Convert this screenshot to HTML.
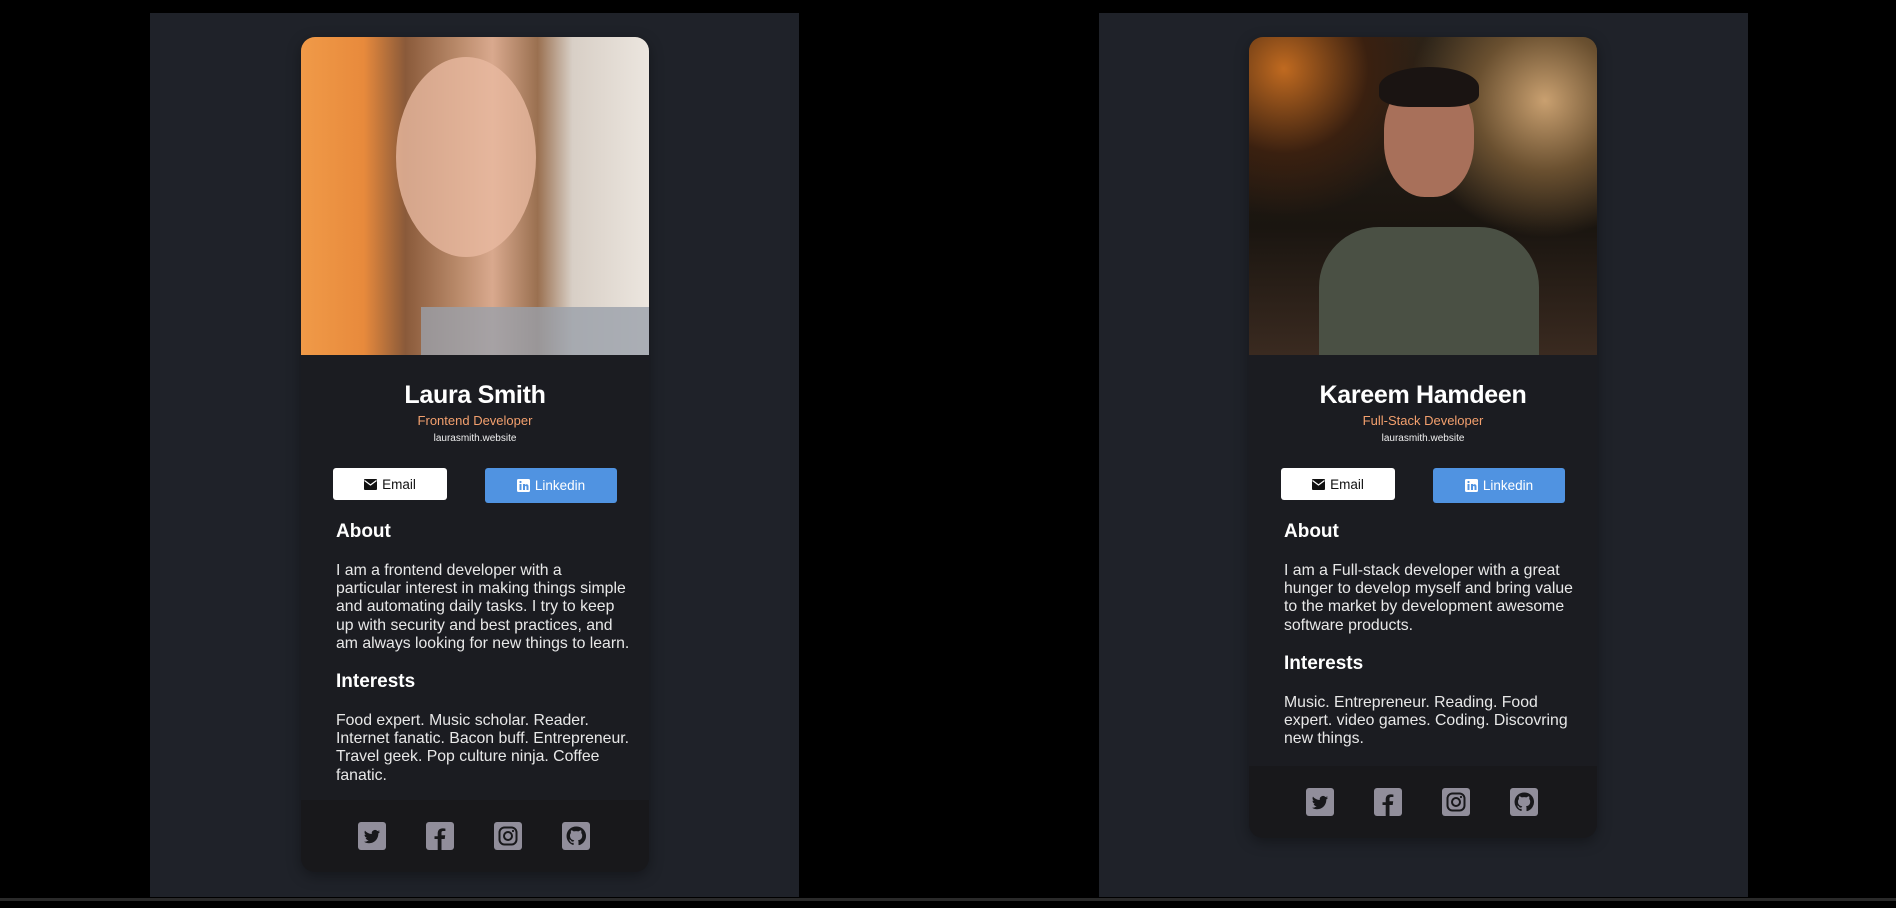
<!DOCTYPE html>
<html><head><meta charset="utf-8"><style>
*{margin:0;padding:0;box-sizing:border-box}
body{width:1896px;height:908px;background:#000;position:relative;overflow:hidden;font-family:"Liberation Sans",sans-serif}
.panel{position:absolute;top:13px;width:649px;height:884px;background:#1f2229}
.card{position:absolute;width:348px;background:#1b1c21;border-radius:14px;overflow:hidden;box-shadow:0 4px 14px rgba(0,0,0,.35)}
.photo{height:318px;position:relative;overflow:hidden}
.name{position:absolute;left:0;width:348px;text-align:center;color:#fff;font-weight:bold;font-size:25px;top:344px;letter-spacing:-.3px}
.job{position:absolute;left:0;width:348px;text-align:center;color:#f3a06e;font-size:13px;top:376px}
.site{position:absolute;left:0;width:348px;text-align:center;color:#f0f0f0;font-size:10px;top:396px}
.btn{position:absolute;top:431px;height:33px;border-radius:3px;font-size:13.5px;display:flex;align-items:center;justify-content:center;gap:5px}
.em{left:32px;width:114px;background:#fff;color:#111;height:32px}
.li{left:184px;width:132px;background:#5093e1;color:#fff;height:35px}
.h{position:absolute;left:35px;color:#fff;font-weight:bold;font-size:19px}
.p{position:absolute;left:35px;width:310px;color:#e8e8e8;font-size:15.8px;line-height:18.2px;white-space:nowrap}
.foot{position:absolute;left:0;bottom:0;width:348px;background:#18181b;height:72px}
.ic{position:absolute;top:22px;width:28px;height:28px;background:#918e9b;border-radius:3px}
.ic svg{width:28px;height:28px;display:block}
.line{position:absolute;left:0;top:898px;width:1896px;height:3px;background:#2a2a2a}
</style></head><body>
<div class="panel" style="left:150px"></div>
<div class="panel" style="left:1099px"></div>
<div class="line"></div>

<div class="card" style="left:301px;top:37px;height:835px">
 <div class="photo" style="background:linear-gradient(90deg,#f09a48 0%,#e88a3c 18%,#8a5a3a 30%,#b98a6a 45%,#d9a98e 55%,#9a7050 68%,#d8cfc6 78%,#ece6df 100%)">
  <div style="position:absolute;left:95px;top:20px;width:140px;height:200px;border-radius:50%;background:#e8b9a0;opacity:.8"></div>
  <div style="position:absolute;left:120px;top:270px;width:228px;height:60px;background:#9aa0aa;opacity:.8"></div>
 </div>
 <div class="name">Laura Smith</div>
 <div class="job">Frontend Developer</div>
 <div class="site">laurasmith.website</div>
 <div class="btn em"><svg width="13" height="11" viewBox="0 0 13 11"><rect width="13" height="11" rx="1" fill="#111"/><path d="M0.5 1.5L6.5 6L12.5 1.5" stroke="#fff" stroke-width="1.2" fill="none"/></svg>Email</div>
 <div class="btn li"><svg width="13" height="13" viewBox="0 0 13 13"><rect width="13" height="13" rx="1.5" fill="#fff"/><rect x="2.5" y="5" width="2" height="6" fill="#5093e1"/><circle cx="3.5" cy="3" r="1.1" fill="#5093e1"/><path d="M6 11V5h2v1c.5-1 3.5-1.5 3.5 1.5V11h-2V8c0-1.5-1.5-1.5-1.5 0v3z" fill="#5093e1"/></svg>Linkedin</div>
 <div class="h" style="top:484px">About</div>
 <div class="p" style="top:525px">I am a frontend developer with a<br>particular interest in making things simple<br>and automating daily tasks. I try to keep<br>up with security and best practices, and<br>am always looking for new things to learn.</div>
 <div class="h" style="top:634px">Interests</div>
 <div class="p" style="top:675px">Food expert. Music scholar. Reader.<br>Internet fanatic. Bacon buff. Entrepreneur.<br>Travel geek. Pop culture ninja. Coffee<br>fanatic.</div>
 <div class="foot">
  <div class="ic" style="left:57px"><svg viewBox="0 0 28 28"><path d="M22 9.5c-.6.3-1.2.4-1.9.5.7-.4 1.2-1 1.4-1.8-.6.4-1.3.6-2.1.8a3.3 3.3 0 0 0-5.6 3c-2.7-.1-5.2-1.4-6.8-3.4-.9 1.5-.4 3.4 1 4.4-.5 0-1-.2-1.5-.4 0 1.6 1.1 3 2.6 3.3-.5.1-1 .2-1.5.1.4 1.3 1.7 2.3 3.1 2.3A6.6 6.6 0 0 1 6 19.7c1.5.9 3.2 1.5 5 1.5 6.1 0 9.5-5.1 9.3-9.7.7-.5 1.2-1.1 1.7-1.8z" fill="#18181b"/></svg></div>
  <div class="ic" style="left:125px"><svg viewBox="0 0 28 28"><path d="M15.5 28V17h3.2l.5-3.8h-3.7v-2.4c0-1.1.3-1.8 1.9-1.8h2V6.6c-.4 0-1.5-.2-2.9-.2-2.9 0-4.8 1.7-4.8 5v2.8H8.5V17h3.2v11z" fill="#18181b"/></svg></div>
  <div class="ic" style="left:193px"><svg viewBox="0 0 28 28"><rect x="5.5" y="5.5" width="17" height="17" rx="5" fill="none" stroke="#18181b" stroke-width="2"/><circle cx="14" cy="14" r="4" fill="none" stroke="#18181b" stroke-width="2"/><circle cx="19" cy="9" r="1.1" fill="#18181b"/></svg></div>
  <div class="ic" style="left:261px"><svg viewBox="0 0 28 28"><path d="M14 4.5a9.5 9.5 0 0 0-3 18.5c.5.1.6-.2.6-.5v-1.7c-2.6.6-3.2-1.2-3.2-1.2-.4-1.1-1-1.4-1-1.4-.9-.6.1-.6.1-.6 1 .1 1.5 1 1.5 1 .8 1.5 2.2 1 2.7.8.1-.6.3-1 .6-1.2-2.1-.2-4.3-1-4.3-4.7 0-1 .4-1.9 1-2.5-.1-.3-.4-1.2.1-2.6 0 0 .8-.3 2.6 1a9 9 0 0 1 4.8 0c1.8-1.2 2.6-1 2.6-1 .5 1.4.2 2.3.1 2.6.6.6 1 1.5 1 2.5 0 3.7-2.2 4.5-4.3 4.7.3.3.6.9.6 1.8v2.6c0 .3.2.6.7.5A9.5 9.5 0 0 0 14 4.5z" fill="#18181b"/></svg></div>
 </div>
</div>

<div class="card" style="left:1249px;top:37px;height:801px">
 <div class="photo" style="background:radial-gradient(circle at 85% 20%,#c9a070 0,#6a5030 18%,transparent 35%),radial-gradient(circle at 10% 10%,#c06a20 0,#3a2010 20%,transparent 35%),linear-gradient(180deg,#2a2218,#1a1510 60%,#3a2a20)">
  <div style="position:absolute;left:135px;top:40px;width:90px;height:120px;border-radius:45%;background:#a8705a"></div>
  <div style="position:absolute;left:130px;top:30px;width:100px;height:40px;border-radius:50% 50% 30% 30%;background:#1a1412"></div>
  <div style="position:absolute;left:70px;top:190px;width:220px;height:140px;border-radius:60px 60px 0 0;background:#4a5044"></div>
 </div>
 <div class="name">Kareem Hamdeen</div>
 <div class="job">Full-Stack Developer</div>
 <div class="site">laurasmith.website</div>
 <div class="btn em"><svg width="13" height="11" viewBox="0 0 13 11"><rect width="13" height="11" rx="1" fill="#111"/><path d="M0.5 1.5L6.5 6L12.5 1.5" stroke="#fff" stroke-width="1.2" fill="none"/></svg>Email</div>
 <div class="btn li"><svg width="13" height="13" viewBox="0 0 13 13"><rect width="13" height="13" rx="1.5" fill="#fff"/><rect x="2.5" y="5" width="2" height="6" fill="#5093e1"/><circle cx="3.5" cy="3" r="1.1" fill="#5093e1"/><path d="M6 11V5h2v1c.5-1 3.5-1.5 3.5 1.5V11h-2V8c0-1.5-1.5-1.5-1.5 0v3z" fill="#5093e1"/></svg>Linkedin</div>
 <div class="h" style="top:484px">About</div>
 <div class="p" style="top:525px">I am a Full-stack developer with a great<br>hunger to develop myself and bring value<br>to the market by development awesome<br>software products.</div>
 <div class="h" style="top:616px">Interests</div>
 <div class="p" style="top:657px">Music. Entrepreneur. Reading. Food<br>expert. video games. Coding. Discovring<br>new things.</div>
 <div class="foot">
  <div class="ic" style="left:57px"><svg viewBox="0 0 28 28"><path d="M22 9.5c-.6.3-1.2.4-1.9.5.7-.4 1.2-1 1.4-1.8-.6.4-1.3.6-2.1.8a3.3 3.3 0 0 0-5.6 3c-2.7-.1-5.2-1.4-6.8-3.4-.9 1.5-.4 3.4 1 4.4-.5 0-1-.2-1.5-.4 0 1.6 1.1 3 2.6 3.3-.5.1-1 .2-1.5.1.4 1.3 1.7 2.3 3.1 2.3A6.6 6.6 0 0 1 6 19.7c1.5.9 3.2 1.5 5 1.5 6.1 0 9.5-5.1 9.3-9.7.7-.5 1.2-1.1 1.7-1.8z" fill="#18181b"/></svg></div>
  <div class="ic" style="left:125px"><svg viewBox="0 0 28 28"><path d="M15.5 28V17h3.2l.5-3.8h-3.7v-2.4c0-1.1.3-1.8 1.9-1.8h2V6.6c-.4 0-1.5-.2-2.9-.2-2.9 0-4.8 1.7-4.8 5v2.8H8.5V17h3.2v11z" fill="#18181b"/></svg></div>
  <div class="ic" style="left:193px"><svg viewBox="0 0 28 28"><rect x="5.5" y="5.5" width="17" height="17" rx="5" fill="none" stroke="#18181b" stroke-width="2"/><circle cx="14" cy="14" r="4" fill="none" stroke="#18181b" stroke-width="2"/><circle cx="19" cy="9" r="1.1" fill="#18181b"/></svg></div>
  <div class="ic" style="left:261px"><svg viewBox="0 0 28 28"><path d="M14 4.5a9.5 9.5 0 0 0-3 18.5c.5.1.6-.2.6-.5v-1.7c-2.6.6-3.2-1.2-3.2-1.2-.4-1.1-1-1.4-1-1.4-.9-.6.1-.6.1-.6 1 .1 1.5 1 1.5 1 .8 1.5 2.2 1 2.7.8.1-.6.3-1 .6-1.2-2.1-.2-4.3-1-4.3-4.7 0-1 .4-1.9 1-2.5-.1-.3-.4-1.2.1-2.6 0 0 .8-.3 2.6 1a9 9 0 0 1 4.8 0c1.8-1.2 2.6-1 2.6-1 .5 1.4.2 2.3.1 2.6.6.6 1 1.5 1 2.5 0 3.7-2.2 4.5-4.3 4.7.3.3.6.9.6 1.8v2.6c0 .3.2.6.7.5A9.5 9.5 0 0 0 14 4.5z" fill="#18181b"/></svg></div>
 </div>
</div>
</body></html>
